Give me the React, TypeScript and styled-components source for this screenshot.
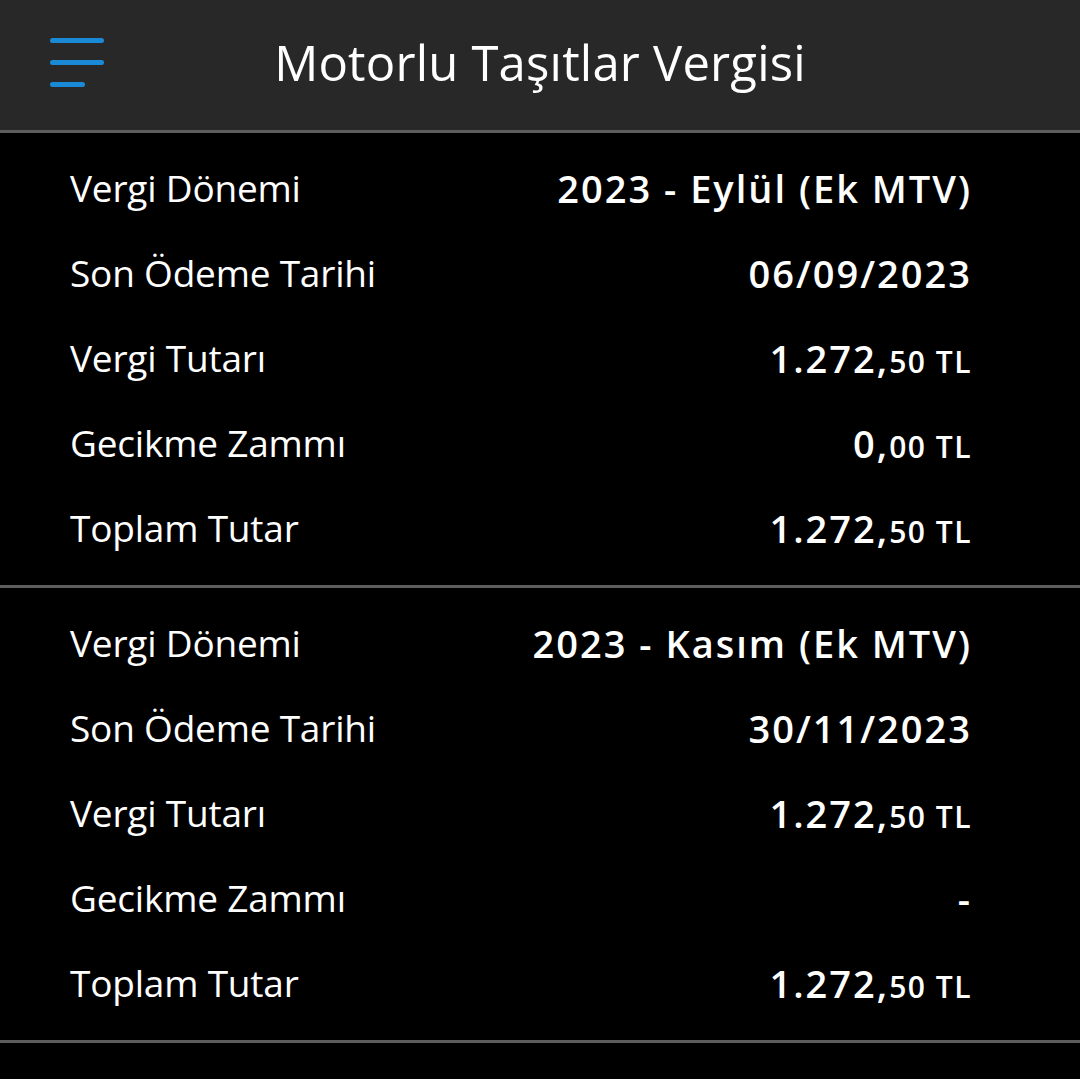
import React from "react";
import styled, { createGlobalStyle } from "styled-components";

const Global = createGlobalStyle`
  html, body { margin: 0; padding: 0; background: #000; }
  body { font-family: "Open Sans", "Noto Sans", sans-serif; color: #fff; }
`;

const Page = styled.div`
  width: 1080px;
  min-height: 1079px;
  background: #000;
`;

const Header = styled.header`
  height: 130px;
  background: #282828;
  border-bottom: 3px solid #5d5d5d;
  display: grid;
  grid-template-columns: 1fr auto 1fr;
  align-items: center;
`;

const MenuButton = styled.div`
  display: flex;
  flex-direction: column;
  gap: 17px;
  padding-left: 50px;
  align-self: center;
  margin-top: -6px;
`;

const MenuLine = styled.span<{ $w: number }>`
  display: block;
  width: ${(p) => p.$w}px;
  height: 5px;
  border-radius: 3px;
  background: #1b8ad6;
`;

const Title = styled.h1`
  margin: 0;
  font-size: 49px;
  font-weight: 400;
  letter-spacing: 0.2px;
  color: #fff;
  margin-top: -6px;
`;

const Section = styled.section`
  padding: 12px 110px 15px 70px;
  border-bottom: 3px solid #5d5d5d;
`;

const Row = styled.div`
  height: 85px;
  display: flex;
  align-items: center;
  justify-content: space-between;
`;

const Label = styled.span`
  font-size: 37px;
  font-weight: 400;
  letter-spacing: -0.2px;
`;

const Value = styled.span`
  font-size: 38px;
  font-weight: 600;
  letter-spacing: 2px;
  margin-right: -2px;
`;

const Small = styled.span`
  font-size: 30px;
  font-weight: 600;
  letter-spacing: 1.5px;
`;

type Entry = { label: string; main: string; sub?: string };

const Amount = ({ main, sub }: { main: string; sub?: string }) => (
  <Value>
    {main}
    {sub && <Small>{sub}</Small>}
  </Value>
);

const sections: Entry[][] = [
  [
    { label: "Vergi Dönemi", main: "2023 - Eylül (Ek MTV)" },
    { label: "Son Ödeme Tarihi", main: "06/09/2023" },
    { label: "Vergi Tutarı", main: "1.272,", sub: "50 TL" },
    { label: "Gecikme Zammı", main: "0,", sub: "00 TL" },
    { label: "Toplam Tutar", main: "1.272,", sub: "50 TL" },
  ],
  [
    { label: "Vergi Dönemi", main: "2023 - Kasım (Ek MTV)" },
    { label: "Son Ödeme Tarihi", main: "30/11/2023" },
    { label: "Vergi Tutarı", main: "1.272,", sub: "50 TL" },
    { label: "Gecikme Zammı", main: "-" },
    { label: "Toplam Tutar", main: "1.272,", sub: "50 TL" },
  ],
];

export default function App() {
  return (
    <Page>
      <Global />
      <Header>
        <MenuButton>
          <MenuLine $w={54} />
          <MenuLine $w={54} />
          <MenuLine $w={35} />
        </MenuButton>
        <Title>Motorlu Taşıtlar Vergisi</Title>
        <div />
      </Header>
      {sections.map((s, i) => (
        <Section key={i}>
          {s.map((e, j) => (
            <Row key={j}>
              <Label>{e.label}</Label>
              <Amount main={e.main} sub={e.sub} />
            </Row>
          ))}
        </Section>
      ))}
    </Page>
  );
}
